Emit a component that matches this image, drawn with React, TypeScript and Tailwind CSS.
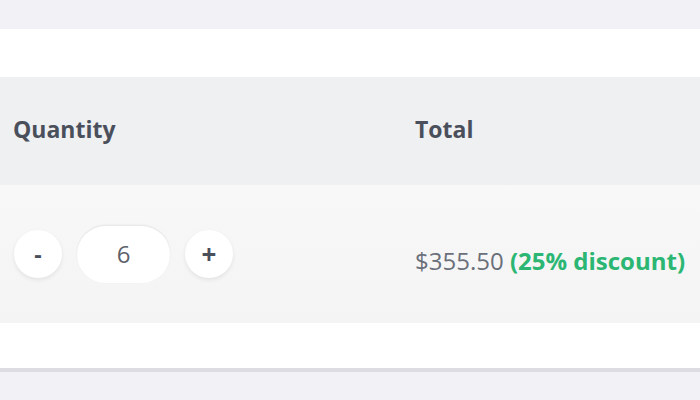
import React, { useState } from 'react';

export default function App() {
  const [qty, setQty] = useState(6);

  return (
    <div className="w-[700px] h-[400px] bg-[#f2f1f6] font-['Open_Sans','Liberation_Sans',sans-serif] overflow-hidden">
      <div className="h-[29px]" />
      <div className="bg-white border-b-[4px] border-[#dddce2]">
        <div className="h-[48px]" />
        {/* Header row */}
        <div className="h-[108px] bg-[#eef0f2] flex items-center text-[23px] font-bold text-[#4a4f5c] pb-[4px]">
          <div className="w-[415px] pl-[13px]">Quantity</div>
          <div>Total</div>
        </div>
        {/* Item row */}
        <div className="h-[138px] bg-gradient-to-b from-[#f8f8f8] to-[#f4f4f4] flex items-center">
          <div className="w-[415px] pl-[14px] flex items-center gap-[15px]">
            <button
              onClick={() => setQty(Math.max(0, qty - 1))}
              className="w-[48px] h-[48px] rounded-full bg-white shadow-[0_2px_4px_rgba(0,0,0,0.08)] text-[23px] font-bold text-[#4a4f5c] flex items-center justify-center"
            >
              -
            </button>
            <div className="w-[93px] h-[57px] rounded-full bg-white shadow-[0_-1px_2px_rgba(0,0,0,0.08)] flex items-center justify-center text-[24px] text-[#5d616b]">
              {qty}
            </div>
            <button
              onClick={() => setQty(qty + 1)}
              className="w-[48px] h-[48px] rounded-full bg-white shadow-[0_2px_4px_rgba(0,0,0,0.08)] text-[26px] font-bold text-[#4a4f5c] flex items-center justify-center"
            >
              +
            </button>
          </div>
          <div className="text-[24px] mt-[14px]">
            <span className="text-[#6b6f7a]">$355.50</span>{' '}
            <span className="font-bold text-[#2bb673]">(25% discount)</span>
          </div>
        </div>
        <div className="h-[45px]" />
      </div>
    </div>
  );
}
